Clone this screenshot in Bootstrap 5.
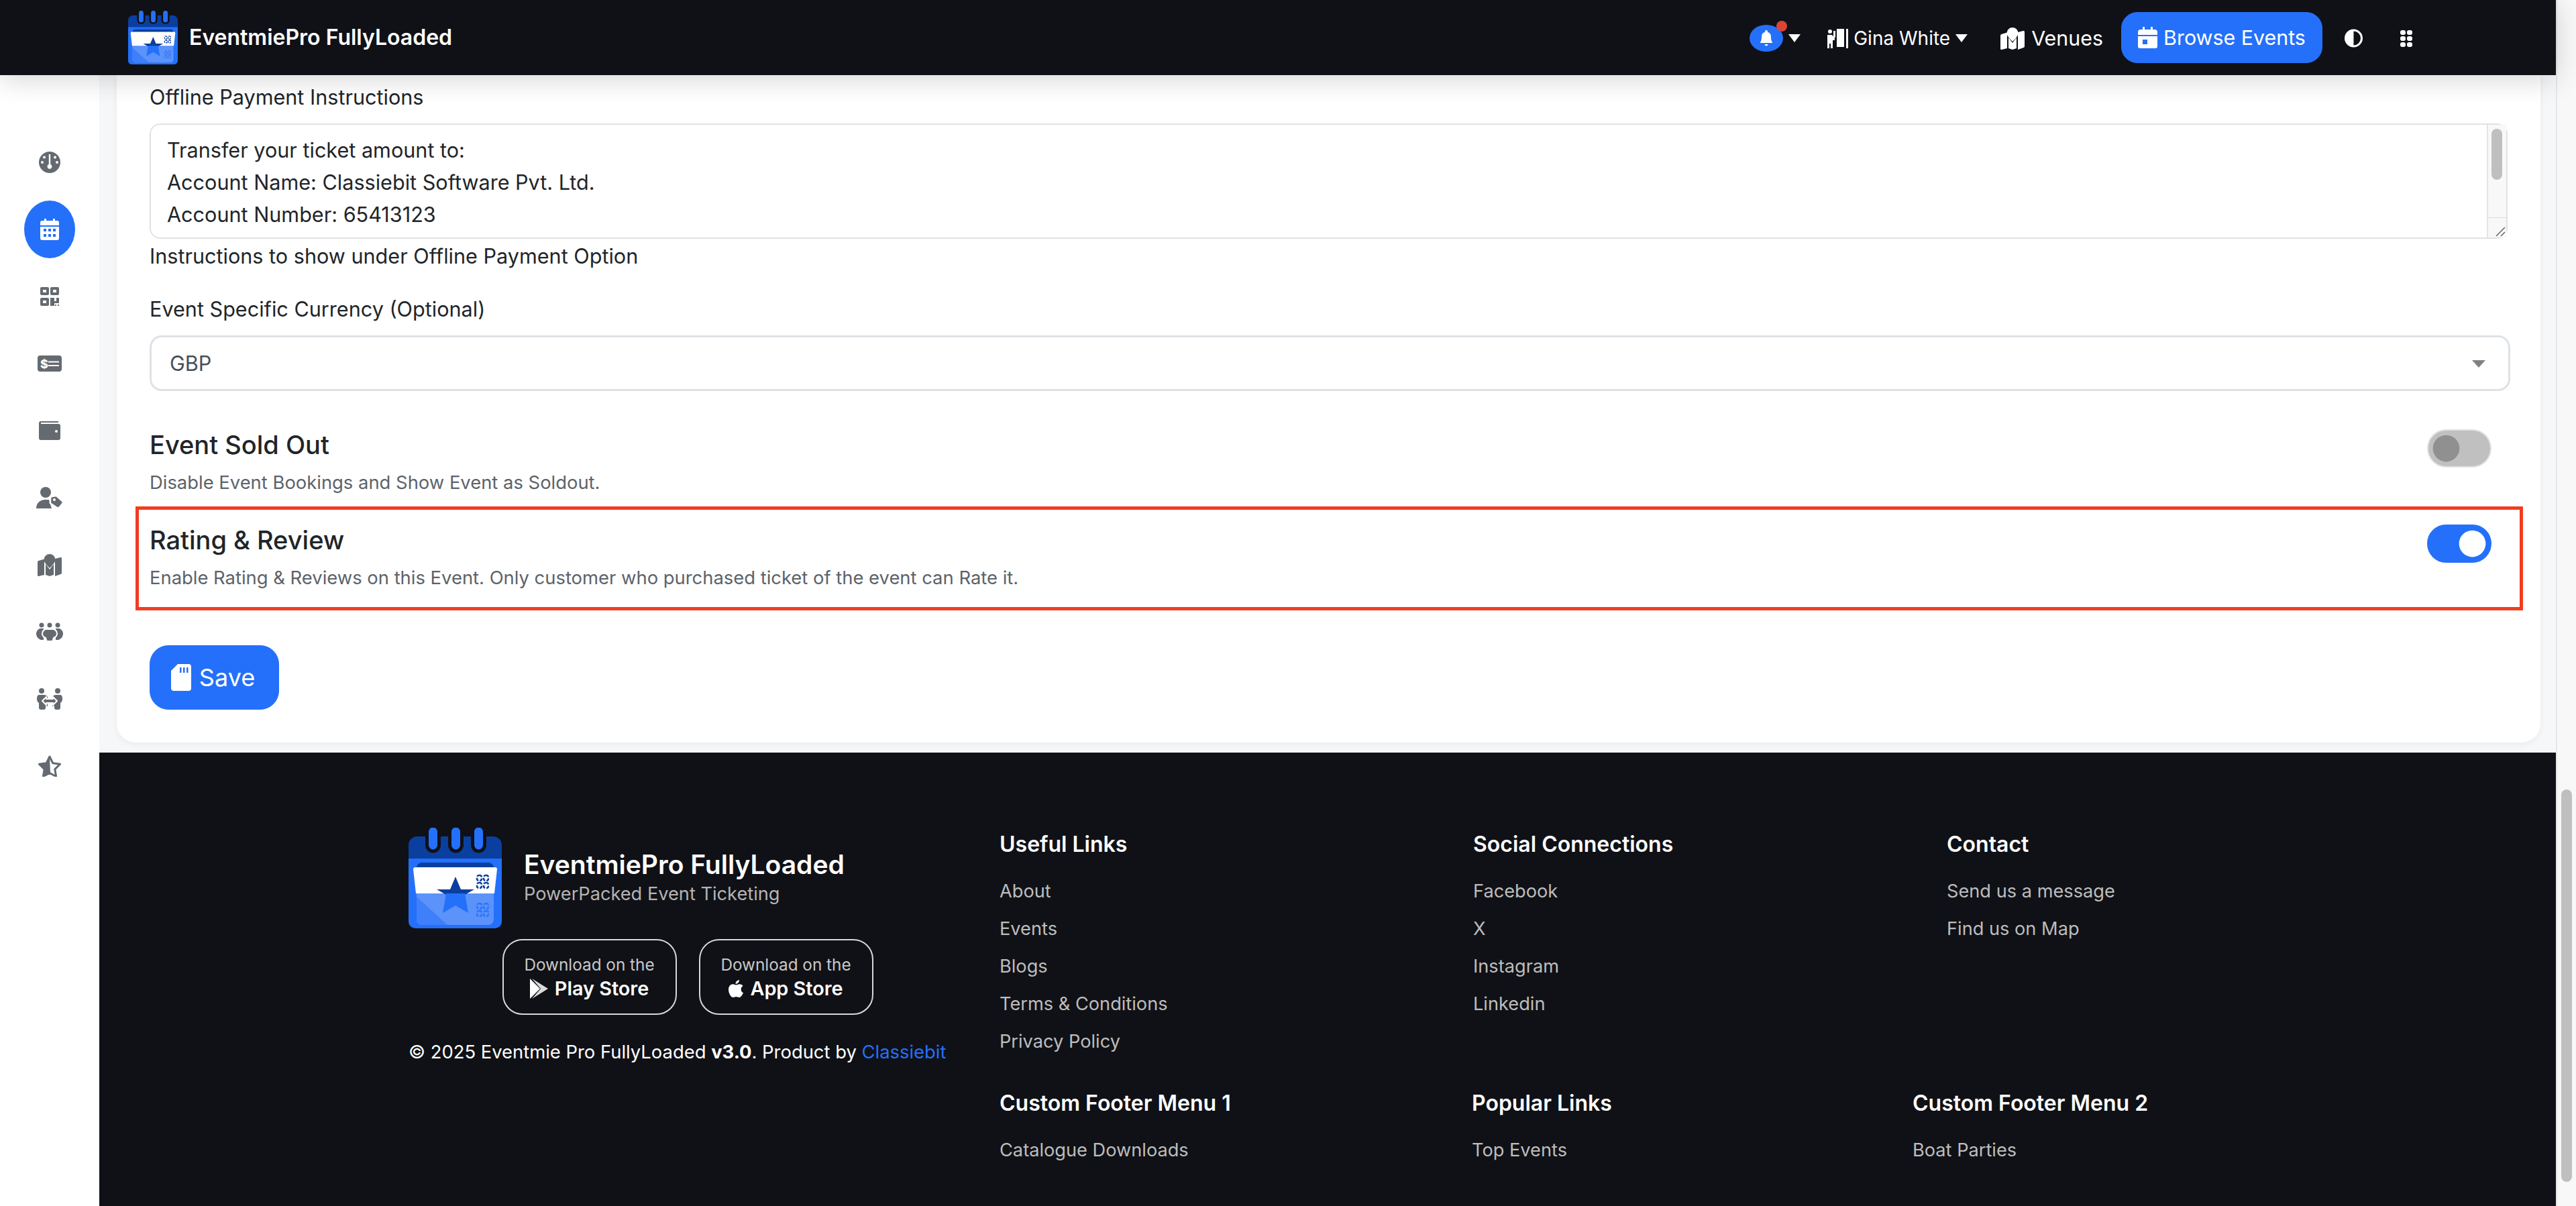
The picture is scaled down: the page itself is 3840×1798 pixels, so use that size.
<!DOCTYPE html>
<html lang="en">

<head>
    <meta charset="UTF-8">
    <meta name="viewport" content="width=device-width, initial-scale=1.0">
    <title>EventmiePro FullyLoaded</title>
    <link href="https://cdn.jsdelivr.net/npm/bootstrap@5.3.0/dist/css/bootstrap.min.css" rel="stylesheet">
    <style>
        :root {
            --brand: #2470fa;
            --dark: #101116;
        }

        html, body {
            height: 1798px;
            overflow: hidden;
        }

        body {
            font-family: Inter, "Liberation Sans", sans-serif;
            font-size: 30.6px;
            line-height: 48px;
            color: #212529;
            background: #f6f7f9;
        }

        .app-wrap {
            width: 3810px;
            height: 1798px;
        }

        /* fake window scrollbar */
        .page-scroll {
            width: 30px;
            height: 1798px;
            background: #f8f8f8;
            border-left: 2px solid #e6e7e9;
            position: relative;
        }

        .page-thumb {
            position: absolute;
            left: 6px;
            top: 1177px;
            width: 16px;
            height: 585px;
            border-radius: 8px;
            background: #bfbfbf;
        }

        /* top bar */
        .top-bar {
            height: 112px;
            background: var(--dark);
            padding: 0 214px 0 191px;
            position: relative;
            z-index: 10;
            box-shadow: 0 6px 40px rgba(0, 0, 0, .17);
        }

        .brand-logo {
            width: 74px;
            height: 80px;
            margin-right: 17px;
        }

        .brand-name {
            font-size: 32px;
            font-weight: 600;
            color: #fff;
            line-height: 1;
            padding: 0;
        }

        .top-link {
            color: #fff;
            text-decoration: none;
            display: flex;
            align-items: center;
            font-size: 28px;
            line-height: 1;
            padding-top: 2px;
        }

        .top-link.big-link {
            font-size: 30.4px;
            margin-left: 49px;
        }

        .venue-ico {
            margin-right: 10px;
        }

        .user-link {
            margin-left: 40px;
        }

        .contrast-link {
            margin-left: 33px;
        }

        .grip-link {
            margin-left: 56px;
        }

        .bell-pill {
            width: 50px;
            height: 40px;
            border-radius: 50%;
            background: var(--brand);
            position: relative;
        }

        .bell-dot {
            position: absolute;
            right: -6px;
            top: -6px;
            width: 16px;
            height: 16px;
            border-radius: 50%;
            background: #dc4437;
        }

        .down-tip {
            width: 0;
            height: 0;
            border-left: 9px solid transparent;
            border-right: 9px solid transparent;
            border-top: 12px solid #fff;
        }

        .browse-btn {
            --bs-btn-bg: var(--brand);
            --bs-btn-border-color: var(--brand);
            --bs-btn-hover-bg: var(--brand);
            width: 300px;
            height: 76px;
            margin-left: 27px;
            border-radius: 24px;
            font-size: 30.4px;
            line-height: 1;
            padding: 0;
            gap: 9px;
        }

        /* left rail */
        .side-rail {
            width: 148px;
            background: #fff;
            padding-top: 80px;
            flex-shrink: 0;
        }

        .rail-item {
            height: 100px;
            padding: 0;
            color: #646a70;
        }

        .rail-item.rail-active {
            width: 76px;
            height: 86px;
            margin: 7px auto;
            border-radius: 50%;
            background: var(--brand);
            color: #fff;
        }

        /* content card */
        .main-area {
            min-width: 0;
        }

        .form-sheet {
            height: 995px;
            margin: 0 23px 0 26px;
            padding: 9px 49px 0;
            background: #fff;
            border-radius: 0 0 28px 28px;
            box-shadow: 0 2px 10px rgba(0, 0, 0, .06);
        }

        .field-label {
            margin: 0 0 15px;
        }

        .note-box {
            position: relative;
            width: 3515px;
        }

        .note-area {
            height: 172px;
            border: 2px solid #dee2e6;
            border-radius: 16px;
            padding: 14px 24px;
            font-size: 30.6px;
            line-height: 48px;
            color: #212529;
        }

        /* scrollbar of the textarea, the headless browser does not paint it */
        .note-bar {
            position: absolute;
            top: 2px;
            right: 2px;
            bottom: 2px;
            width: 29px;
            background: #f8f8f8;
            border-left: 2px solid #e4e4e4;
        }

        .note-thumb {
            position: absolute;
            left: 5px;
            top: 6px;
            width: 16px;
            height: 76px;
            border-radius: 8px;
            background: #bfbfbf;
        }

        .note-grip {
            position: absolute;
            left: 0;
            right: 0;
            bottom: 0;
            height: 30px;
            border-top: 1px solid #dcdcdc;
        }

        .note-hint {
            margin: 2px 0 31px;
        }

        .cur-select {
            width: 3519px;
            height: 83px;
            border: 3px solid #dee2e6;
            border-radius: 18px;
            padding: 0 27px;
            font-size: 30.6px;
            color: #495057;
            --bs-form-select-bg-img: none;
        }

        .select-box {
            position: relative;
        }

        .select-tip {
            position: absolute;
            right: 33px;
            top: 37px;
            width: 0;
            height: 0;
            border-left: 10px solid transparent;
            border-right: 10px solid transparent;
            border-top: 11px solid #808080;
        }

        .switch-line {
            padding-right: 24px;
        }

        .switch-title {
            font-size: 38px;
            font-weight: 500;
            line-height: 48px;
            margin: 0;
        }

        .switch-note {
            font-size: 27.4px;
            line-height: 36px;
            color: #5c636a;
            margin: 14px 0 0;
        }

        .sold-line {
            margin-top: 56px;
        }

        .rate-line {
            margin: 18px -23px 0 -21px;
            height: 155px;
            padding: 21px 42px 0 16px;
            border: 5px solid #f23c20;
        }

        .switch-line .form-check-input {
            width: 96px;
            height: 57px;
            margin: 1px 0 0;
            border: 2px solid #dee2e6;
            background-color: #c0c0c0;
        }

        .switch-line .form-check-input:checked {
            background-color: var(--brand);
            border-color: var(--brand);
        }

        .save-btn {
            --bs-btn-bg: var(--brand);
            --bs-btn-border-color: var(--brand);
            width: 193px;
            height: 96px;
            margin-top: 52px;
            border-radius: 28px;
            font-size: 36px;
            line-height: 1;
            padding: 0 4px 0 0;
            gap: 12px;
        }

        /* footer */
        .site-foot {
            height: 676px;
            margin-top: 15px;
            background: var(--dark);
            padding: 112px 0 0 461px;
            color: #fff;
        }

        .foot-left {
            width: 881px;
        }

        .foot-logo {
            width: 139px;
            height: 150px;
            margin-right: 33px;
        }

        .foot-title {
            padding-top: 4px;
        }

        .foot-brand {
            font-size: 39px;
            font-weight: 600;
            line-height: 44px;
            margin: 0;
        }

        .foot-tag {
            font-size: 27.2px;
            line-height: 44px;
            color: #b4b4b4;
        }

        .store-row {
            width: 832px;
            gap: 33px;
            margin-top: 16px;
        }

        .store-btn {
            width: 260px;
            height: 113px;
            padding-top: 3px;
            border: 2px solid #d8d8d8;
            border-radius: 30px;
            color: #fff;
            text-decoration: none;
        }

        .store-top {
            font-size: 24.3px;
            line-height: 32px;
            color: #c8c8c8;
        }

        .store-name {
            font-size: 28.8px;
            font-weight: 600;
            line-height: 40px;
            gap: 10px;
        }

        .copy-line {
            font-size: 27.4px;
            line-height: 40px;
            margin: 35px 0 0;
        }

        .copy-line a {
            color: var(--brand);
            text-decoration: none;
        }

        .foot-right {
            margin-top: 3px;
        }

        .foot-col {
            width: 706px;
        }

        .foot-col.col-narrow {
            width: 704px;
        }

        .foot-col.col-pop {
            width: 657px;
        }

        .col-first {
            height: 386px;
        }

        .foot-head {
            font-size: 32px;
            font-weight: 600;
            line-height: 44px;
            margin: 0 0 20px;
        }

        .foot-links {
            list-style: none;
            margin: 0;
            padding: 0;
        }

        .foot-links a {
            display: block;
            height: 56px;
            line-height: 56px;
            font-size: 27.2px;
            color: #bdbdbd;
            text-decoration: none;
        }
    </style>
</head>

<body class="d-flex">
    <!-- shared icons -->
    <svg width="0" height="0" class="position-absolute">
        <symbol id="ico-logo" viewBox="0 0 139 150">
            <path d="M0 26a13 13 0 0 1 13-13h113a13 13 0 0 1 13 13v24H0z" fill="#0a3f9f" />
            <path d="M0 46h139v94a10 10 0 0 1-10 10H10a10 10 0 0 1-10-10z" fill="#2470fa" />
            <g fill="#2470fa" stroke="#101116" stroke-width="5">
                <rect x="27.500" y="-3" width="18" height="38" rx="9" />
                <rect x="61.500" y="-3" width="18" height="38" rx="9" />
                <rect x="95.500" y="-3" width="18" height="38" rx="9" />
            </g>
            <path d="M12 60a8 8 0 0 1 8-8h99a8 8 0 0 1 8 8v6H12z" fill="#0a3f9f" />
            <path d="M12 98h115v39a8 8 0 0 1-8 8H20a8 8 0 0 1-8-8z" fill="#5b93fb" />
            <path d="M12 103l46 42H20a8 8 0 0 1-8-8z" fill="#3f7ffa" />
            <path d="M7 62q0-3 3-3h119q3 0 3 3l-4 36H11z" fill="#fff" />
            <path d="M70 73l8 19h20l-14 8 -28 0 -14-8h20z" fill="#0a3f9f" />
            <path d="M56 98h28l5 29-19-11-19 11z" fill="#2470fa" />
            <g fill="none" stroke="#0a3f9f" stroke-width="2.500" stroke-dasharray="5 2">
                <rect x="102" y="71" width="7" height="8" rx="3" />
                <rect x="112" y="71" width="7" height="8" rx="3" />
                <rect x="102" y="82" width="7" height="8" rx="3" />
                <rect x="112" y="82" width="7" height="8" rx="3" />
            </g>
            <g fill="none" stroke="#2e74fa" stroke-width="2.500" stroke-dasharray="5 2">
                <rect x="102" y="113" width="7" height="8" rx="3" />
                <rect x="112" y="113" width="7" height="8" rx="3" />
                <rect x="102" y="124" width="7" height="8" rx="3" />
                <rect x="112" y="124" width="7" height="8" rx="3" />
            </g>
        </symbol>
        <symbol id="ico-map" viewBox="0 0 36 33">
            <path d="M0 12q0-1.500 1.500-2L10 7.500V31l-8 2q-2 .5-2-1.500z" fill="currentColor" />
            <path d="M18 0a8.500 8.500 0 0 1 8.500 8.500c0 4-5 9-8.500 12.500-3.500-3.500-8.500-8.500-8.500-12.500A8.500 8.500 0 0 1 18 0z" fill="currentColor" />
            <path d="M12 15l6 8 6-8v16l-6 2-6-2z" fill="currentColor" />
            <path d="M26 7l8-2q2-.5 2 1.500V28q0 1.500-1.500 2L26 33z" fill="currentColor" />
        </symbol>
    </svg>

    <div class="app-wrap d-flex flex-column">
        <nav class="navbar navbar-expand top-bar flex-nowrap">
            <a class="navbar-brand brand-name d-flex align-items-center m-0" href="#">
                <svg class="brand-logo">
                    <use href="#ico-logo" />
                </svg>
                EventmiePro FullyLoaded
            </a>
            <div class="d-flex align-items-center ms-auto">
                <a class="top-link" href="#">
                    <span class="bell-pill d-flex align-items-center justify-content-center">
                        <svg width="18" height="24" viewBox="0 0 18 24" fill="#fff">
                            <path d="M9 0a2 2 0 0 1 2 2v1c3.500.7 5 3.500 5 7 0 5 1 6.500 2 8v1H0v-1c1-1.500 2-3 2-8 0-3.500 1.500-6.300 5-7V2a2 2 0 0 1 2-2z" />
                            <path d="M6.500 21h5a2.500 2.500 0 0 1-5 0z" />
                        </svg>
                        <span class="bell-dot"></span>
                    </span>
                    <span class="down-tip ms-2"></span>
                </a>
                <a class="top-link user-link" href="#">
                    <svg width="31" height="29" viewBox="0 0 31 29" fill="#fff" class="me-2">
                        <circle cx="4" cy="4" r="3" />
                        <path d="M0 9h7l4 5v3H8v12H5v-7H3v7H0z" />
                        <path d="M9 3h3v10H9zM14 0h11v27H14zM28 0h3v29h-3z" />
                    </svg>
                    Gina White
                    <span class="down-tip ms-2"></span>
                </a>
                <a class="top-link big-link" href="#">
                    <svg width="36" height="33" class="venue-ico">
                        <use href="#ico-map" />
                    </svg>
                    Venues
                </a>
                <a class="btn btn-primary browse-btn d-flex align-items-center justify-content-center" href="#">
                    <svg width="29" height="32" viewBox="0 0 29 32" fill="#fff">
                        <path d="M7 0h3v4h9V0h3v4h3a4 4 0 0 1 4 4v4H0V8a4 4 0 0 1 4-4h3z" />
                        <path d="M0 14h29v15a3 3 0 0 1-3 3H3a3 3 0 0 1-3-3zm7 5v7h7v-7z" fill-rule="evenodd" />
                    </svg>
                    Browse Events
                </a>
                <a class="top-link contrast-link" href="#" aria-label="Theme">
                    <svg width="27" height="28" viewBox="0 0 27 28">
                        <circle cx="13.500" cy="14" r="12" fill="none" stroke="#fff" stroke-width="3" />
                        <path d="M13.500 2a12 12 0 0 0 0 24z" fill="#fff" />
                    </svg>
                </a>
                <a class="top-link grip-link" href="#" aria-label="Menu">
                    <svg width="18" height="25" viewBox="0 0 18 25" fill="#fff">
                        <rect width="8" height="7" rx="3" />
                        <rect x="10" width="8" height="7" rx="3" />
                        <rect y="9" width="8" height="7" rx="3" />
                        <rect x="10" y="9" width="8" height="7" rx="3" />
                        <rect y="18" width="8" height="7" rx="3" />
                        <rect x="10" y="18" width="8" height="7" rx="3" />
                    </svg>
                </a>
            </div>
        </nav>

        <div class="d-flex flex-grow-1">
            <ul class="nav flex-column side-rail">
                <li class="nav-item">
                    <a class="nav-link rail-item d-flex align-items-center justify-content-center" href="#" aria-label="Dashboard">
                        <svg width="32" height="32" viewBox="0 0 32 32">
                            <circle cx="16" cy="16" r="16" fill="currentColor" />
                            <path d="M14.800 4h2.400v15a3.500 3.500 0 1 1-2.400 0z" fill="#fff" />
                            <g fill="#fff">
                                <circle cx="8" cy="8.500" r="2" />
                                <circle cx="24" cy="8.500" r="2" />
                                <circle cx="5" cy="16" r="2" />
                                <circle cx="27" cy="16" r="2" />
                            </g>
                        </svg>
                    </a>
                </li>
                <li class="nav-item">
                    <a class="nav-link rail-item rail-active d-flex align-items-center justify-content-center" href="#" aria-label="Events">
                        <svg width="28" height="32" viewBox="0 0 28 32" fill="#fff">
                            <path d="M6 0h3v3h10V0h3v3h3a3 3 0 0 1 3 3v4H0V6a3 3 0 0 1 3-3h3z" />
                            <path d="M0 12h28v17a3 3 0 0 1-3 3H3a3 3 0 0 1-3-3zM5 15v4h4v-4zM12 15v4h4v-4zM19 15v4h4v-4zM5 23v4h4v-4zM12 23v4h4v-4zM19 23v4h4v-4z" fill-rule="evenodd" />
                        </svg>
                    </a>
                </li>
                <li class="nav-item">
                    <a class="nav-link rail-item d-flex align-items-center justify-content-center" href="#" aria-label="Tickets">
                        <svg width="28" height="28" viewBox="0 0 28 28" fill="currentColor">
                            <path d="M2 0h9a2 2 0 0 1 2 2v8a2 2 0 0 1-2 2H2a2 2 0 0 1-2-2V2a2 2 0 0 1 2-2zm2 4v4h5V4z" fill-rule="evenodd" />
                            <path d="M17 0h9a2 2 0 0 1 2 2v8a2 2 0 0 1-2 2h-9a2 2 0 0 1-2-2V2a2 2 0 0 1 2-2zm2 4v4h5V4z" fill-rule="evenodd" />
                            <path d="M2 16h9a2 2 0 0 1 2 2v8a2 2 0 0 1-2 2H2a2 2 0 0 1-2-2v-8a2 2 0 0 1 2-2zm2 4v4h5v-4z" fill-rule="evenodd" />
                            <path d="M15 16h6v5h3v-5h4v8h-7v4h-6zM22 26h2v2h-2zM26 26h2v2h-2z" />
                        </svg>
                    </a>
                </li>
                <li class="nav-item">
                    <a class="nav-link rail-item d-flex align-items-center justify-content-center" href="#" aria-label="Bookings">
                        <svg width="36" height="24" viewBox="0 0 36 24">
                            <rect width="36" height="24" rx="4" fill="currentColor" />
                            <text x="4" y="19" font-family="Inter, sans-serif" font-size="18" font-weight="800" fill="#fff">$</text>
                            <path d="M16 8.500h16v2H16zM16 14h16v2H16z" fill="#fff" />
                        </svg>
                    </a>
                </li>
                <li class="nav-item">
                    <a class="nav-link rail-item d-flex align-items-center justify-content-center" href="#" aria-label="Wallet">
                        <svg width="32" height="28" viewBox="0 0 32 28" fill="currentColor">
                            <path d="M3 0h26v2H3z" />
                            <path d="M3 4h26a3 3 0 0 1 3 3v18a3 3 0 0 1-3 3H3a3 3 0 0 1-3-3V3a3 3 0 0 1 3-3zm23 9a2 2 0 1 0 0 4 2 2 0 0 0 0-4z" fill-rule="evenodd" />
                        </svg>
                    </a>
                </li>
                <li class="nav-item">
                    <a class="nav-link rail-item d-flex align-items-center justify-content-center" href="#" aria-label="Customers">
                        <svg width="40" height="32" viewBox="0 0 40 32" fill="currentColor">
                            <circle cx="14" cy="8" r="8" />
                            <path d="M0 32c0-8 6-13 13-13h6l4 13z" />
                            <path d="M21 17q0-3 3-3l6-1 9 8q2 2 0 4l-4 5q-2 2-4 1l-9-6q-2-1-1-3z" stroke="#fff" stroke-width="2.500" />
                            <circle cx="27" cy="19" r="2" fill="#fff" />
                        </svg>
                    </a>
                </li>
                <li class="nav-item">
                    <a class="nav-link rail-item d-flex align-items-center justify-content-center" href="#" aria-label="Venues">
                        <svg width="36" height="33">
                            <use href="#ico-map" />
                        </svg>
                    </a>
                </li>
                <li class="nav-item">
                    <a class="nav-link rail-item d-flex align-items-center justify-content-center" href="#" aria-label="Teams">
                        <svg width="40" height="28" viewBox="0 0 40 28" fill="currentColor">
                            <circle cx="8" cy="4" r="3.500" />
                            <circle cx="20" cy="4" r="3.500" />
                            <circle cx="32" cy="4" r="3.500" />
                            <path d="M5 9h6v17H7a4 4 0 0 1-2-1q-5-3-5-8 0-5 5-8zM29 9h6q5 3 5 8 0 5-5 8a4 4 0 0 1-2 1h-4z" />
                            <path d="M14 10h12q5 2 5 7 0 4-5 6l-1 3q0 2-2 2h-6q-2 0-2-2l-1-3q-5-2-5-6 0-5 5-7z" stroke="#fff" stroke-width="2" />
                        </svg>
                    </a>
                </li>
                <li class="nav-item">
                    <a class="nav-link rail-item d-flex align-items-center justify-content-center" href="#" aria-label="Transfers">
                        <svg width="38" height="32" viewBox="0 0 38 32" fill="currentColor">
                            <circle cx="7" cy="4" r="4" />
                            <circle cx="31" cy="4" r="4" />
                            <path d="M3 10h8q3 0 5 3v14l-3-1v3a3 3 0 0 1-3 3H6a3 3 0 0 1-3-3v-7Q0 20 0 16q0-6 3-6zM27 10h8q3 0 3 6 0 4-3 6v7a3 3 0 0 1-3 3h-3a3 3 0 0 1-3-3v-3l-3 1V13q2-3 5-3z" />
                            <path d="M8 19l6-6v3h10v-3l6 6-6 6v-3H14v3z" stroke="#fff" stroke-width="2" stroke-linejoin="round" />
                        </svg>
                    </a>
                </li>
                <li class="nav-item">
                    <a class="nav-link rail-item d-flex align-items-center justify-content-center" href="#" aria-label="Reviews">
                        <svg width="34" height="32" viewBox="0 0 34 32" fill="currentColor">
                            <path d="M17 2l4.800 9.800 10.700 1.500-7.700 7.600 1.800 10.600L17 26.500l-9.600 5 1.800-10.600L1.500 13.300l10.700-1.500z" fill="none" stroke="currentColor" stroke-width="3" stroke-linejoin="round" />
                            <path d="M17 2l1 24-9 5 1-10-9-8 11-2z" />
                        </svg>
                    </a>
                </li>
            </ul>

            <div class="main-area flex-grow-1 d-flex flex-column">
                <form class="form-sheet">
                    <label class="form-label d-block field-label" for="offlineNote">Offline Payment Instructions</label>
                    <div class="note-box">
                        <textarea class="form-control note-area" id="offlineNote" rows="3">Transfer your ticket amount to:
Account Name: Classiebit Software Pvt. Ltd.
Account Number: 65413123</textarea>
                        <div class="note-bar">
                            <div class="note-thumb"></div>
                            <div class="note-grip">
                                <svg width="27" height="29" viewBox="0 0 27 29" class="d-block">
                                    <path d="M12 27l13-13M19 27l6-6" stroke="#666" stroke-width="1.500" fill="none" />
                                </svg>
                            </div>
                        </div>
                    </div>
                    <p class="note-hint">Instructions to show under Offline Payment Option</p>

                    <label class="form-label d-block field-label" for="currencyPick">Event Specific Currency (Optional)</label>
                    <div class="select-box">
                        <select class="form-select cur-select" id="currencyPick">
                            <option>GBP</option>
                        </select>
                        <span class="select-tip"></span>
                    </div>

                    <div class="switch-line sold-line d-flex justify-content-between">
                        <div>
                            <h5 class="switch-title">Event Sold Out</h5>
                            <p class="switch-note">Disable Event Bookings and Show Event as Soldout.</p>
                        </div>
                        <div class="form-check form-switch p-0 m-0">
                            <input class="form-check-input" type="checkbox" role="switch" aria-label="Event Sold Out">
                        </div>
                    </div>

                    <div class="switch-line rate-line d-flex justify-content-between">
                        <div>
                            <h5 class="switch-title">Rating &amp; Review</h5>
                            <p class="switch-note">Enable Rating &amp; Reviews on this Event. Only customer who purchased ticket of the event can Rate it.</p>
                        </div>
                        <div class="form-check form-switch p-0 m-0">
                            <input class="form-check-input" type="checkbox" role="switch" aria-label="Rating and Review" checked>
                        </div>
                    </div>

                    <button type="button" class="btn btn-primary save-btn d-flex align-items-center justify-content-center">
                        <svg width="30" height="40" viewBox="0 0 30 40" fill="#fff">
                            <path d="M10 0h16a4 4 0 0 1 4 4v32a4 4 0 0 1-4 4H4a4 4 0 0 1-4-4V10zM13 5v8h2.500V5zM18 5v8h2.500V5zM23 5v8h2.500V5z" fill-rule="evenodd" />
                        </svg>
                        Save
                    </button>
                </form>

                <footer class="site-foot d-flex">
                    <div class="foot-left">
                        <div class="d-flex align-items-center">
                            <svg class="foot-logo">
                                <use href="#ico-logo" />
                            </svg>
                            <div class="foot-title">
                                <p class="foot-brand">EventmiePro FullyLoaded</p>
                                <div class="foot-tag">PowerPacked Event Ticketing</div>
                            </div>
                        </div>
                        <div class="store-row d-flex justify-content-center">
                            <a class="store-btn d-flex flex-column align-items-center justify-content-center" href="#">
                                <span class="store-top">Download on the</span>
                                <span class="store-name d-flex align-items-center">
                                    <svg width="27" height="30" viewBox="0 0 27 30">
                                        <path d="M0 0l15 15L0 30z" fill="#fff" />
                                        <path d="M3 0l24 15L3 30l13-15z" fill="#fff" opacity=".85" />
                                    </svg>
                                    Play Store
                                </span>
                            </a>
                            <a class="store-btn d-flex flex-column align-items-center justify-content-center" href="#">
                                <span class="store-top">Download on the</span>
                                <span class="store-name d-flex align-items-center">
                                    <svg width="22" height="26" viewBox="0 0 22 26" fill="#fff">
                                        <path d="M16 0c.2 3-2.500 6-5.500 5.800C10.200 3 13 .3 16 0z" />
                                        <path d="M11 7.500c1.500 0 3-1.300 5.500-1.300 2 0 4 1 5 2.700-4.200 2.500-3.500 8.500 .5 10.200-1.200 3-3.500 6.900-5.800 6.900-1.800 0-2.500-1.100-4.700-1.100s-3 1.100-4.700 1.100C3.500 26 0 19.500 0 14.500 0 9.300 3.200 6.300 6.300 6.300c2 0 3.500 1.200 4.700 1.200z" />
                                    </svg>
                                    App Store
                                </span>
                            </a>
                        </div>
                        <p class="copy-line">© 2025 Eventmie Pro FullyLoaded <strong>v3.0</strong>. Product by <a href="#">Classiebit</a></p>
                    </div>

                    <div class="foot-right">
                        <div class="d-flex col-first">
                            <div class="foot-col">
                                <h5 class="foot-head">Useful Links</h5>
                                <ul class="foot-links">
                                    <li><a href="#">About</a></li>
                                    <li><a href="#">Events</a></li>
                                    <li><a href="#">Blogs</a></li>
                                    <li><a href="#">Terms &amp; Conditions</a></li>
                                    <li><a href="#">Privacy Policy</a></li>
                                </ul>
                            </div>
                            <div class="foot-col">
                                <h5 class="foot-head">Social Connections</h5>
                                <ul class="foot-links">
                                    <li><a href="#">Facebook</a></li>
                                    <li><a href="#">X</a></li>
                                    <li><a href="#">Instagram</a></li>
                                    <li><a href="#">Linkedin</a></li>
                                </ul>
                            </div>
                            <div class="foot-col">
                                <h5 class="foot-head">Contact</h5>
                                <ul class="foot-links">
                                    <li><a href="#">Send us a message</a></li>
                                    <li><a href="#">Find us on Map</a></li>
                                </ul>
                            </div>
                        </div>
                        <div class="d-flex">
                            <div class="foot-col col-narrow">
                                <h5 class="foot-head">Custom Footer Menu 1</h5>
                                <ul class="foot-links">
                                    <li><a href="#">Catalogue Downloads</a></li>
                                </ul>
                            </div>
                            <div class="foot-col col-pop">
                                <h5 class="foot-head">Popular Links</h5>
                                <ul class="foot-links">
                                    <li><a href="#">Top Events</a></li>
                                </ul>
                            </div>
                            <div class="foot-col">
                                <h5 class="foot-head">Custom Footer Menu 2</h5>
                                <ul class="foot-links">
                                    <li><a href="#">Boat Parties</a></li>
                                </ul>
                            </div>
                        </div>
                    </div>
                </footer>
            </div>
        </div>
    </div>

    <div class="page-scroll flex-shrink-0">
        <div class="page-thumb"></div>
    </div>

    <script src="https://cdn.jsdelivr.net/npm/bootstrap@5.3.0/dist/js/bootstrap.bundle.min.js"></script>
</body>

</html>
